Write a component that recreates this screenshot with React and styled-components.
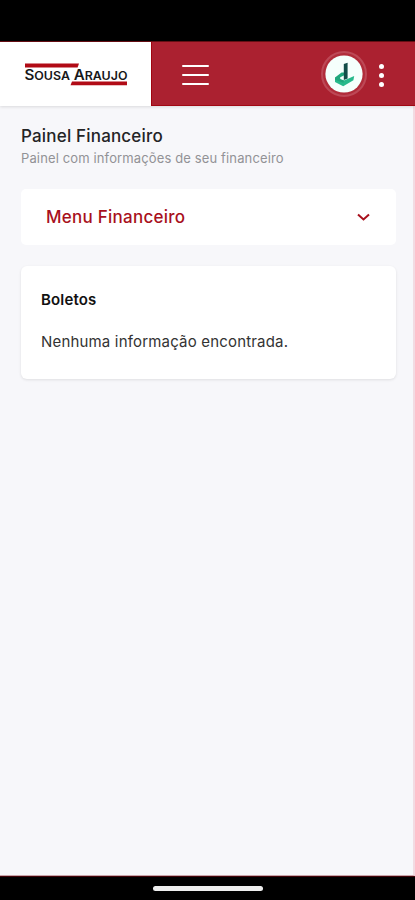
import React from 'react'
import styled, { createGlobalStyle } from 'styled-components'

const GlobalStyle = createGlobalStyle`
  * {
    box-sizing: border-box;
  }

  body {
    margin: 0;
    background: #000;
    font-family: Inter, 'Open Sans', sans-serif;
  }
`
const Screen = styled.div`
  display: flex;
  flex-direction: column;
  width: 415px;
  height: 900px;
  padding-top: 41px;
  overflow: hidden;
  background: #000;
`
const Header = styled.header`
  display: flex;
  flex: none;
  height: 65px;
  border-top: 1px solid #650e13;
  background: #ab2130;
  box-shadow: 0 1px 3px rgba(0, 0, 0, 0.12);
  z-index: 1;
`
const Brand = styled.div`
  width: 151px;
  height: 64px;
  background: #fff;
`
const Toolbar = styled.div`
  display: flex;
  flex: 1;
  align-items: center;
  padding: 1px 31px 0 30px;
  border-left: 1px solid #a10510;
  border-bottom: 1px solid #a10813;
`
const MenuButton = styled.button`
  display: flex;
  flex-direction: column;
  justify-content: space-between;
  width: 27px;
  height: 20px;
  margin: 2px auto 0 0;
  padding: 0;
  border: 0;
  background: none;
`
const MenuLine = styled.span`
  height: 2px;
  border-radius: 1px;
  background: #fff;
`
const Avatar = styled.div`
  width: 46px;
  height: 46px;
  margin-right: 12px;
  border: 2px solid #bd4856;
  border-radius: 50%;
  padding: 2px;
  background: #b12c3a;
`
const MoreButton = styled.button`
  display: flex;
  flex-direction: column;
  justify-content: space-between;
  width: 5px;
  height: 23px;
  margin: 2px 0 0;
  padding: 0;
  border: 0;
  background: none;
`
const Dot = styled.span`
  width: 5px;
  height: 5px;
  border-radius: 50%;
  background: #fff;
`
const Content = styled.main`
  flex: 1;
  padding: 19px 17px 0 21px;
  border-right: 2px solid #f2dbe2;
  border-bottom: 1px solid #c9a5aa;
  background: #f7f7fa;
`
const Title = styled.h1`
  margin: 0;
  color: #242426;
  font-size: 17px;
  font-weight: 500;
  line-height: 22px;
  letter-spacing: 0.18px;
`
const Subtitle = styled.p`
  margin: 1px 0 0;
  color: #929296;
  font-size: 13px;
  line-height: 20px;
  letter-spacing: 0.13px;
`
const MenuCard = styled.section`
  display: flex;
  align-items: center;
  justify-content: space-between;
  height: 56px;
  margin-top: 21px;
  padding: 0 25px 1px;
  border-radius: 5px;
  background: #fff;
  color: #a8101c;
`
const MenuTitle = styled.span`
  font-size: 17px;
  font-weight: 500;
  line-height: 22px;
  letter-spacing: 0.25px;
`
const Card = styled.section`
  height: 113px;
  margin-top: 21px;
  padding: 23px 20px;
  border-radius: 6px;
  background: #fff;
  box-shadow: 0 1px 3px rgba(0, 0, 0, 0.1);
`
const CardTitle = styled.h2`
  margin: 0;
  color: #111;
  font-size: 15px;
  font-weight: 600;
  line-height: 22px;
  letter-spacing: 0.15px;
`
const CardText = styled.p`
  margin: 20px 0 0;
  color: #333;
  font-size: 15px;
  line-height: 22px;
  letter-spacing: 0.18px;
`
const HomeBar = styled.footer`
  display: flex;
  flex: none;
  justify-content: center;
  height: 24px;
  padding-top: 9px;
  border-top: 1px solid #400308;
  background: #000;
`
const HomeIndicator = styled.div`
  width: 110px;
  height: 5px;
  border-radius: 3px;
  background: #eee;
`
const LogoText = styled.text`
  fill: #171719;
  font-family: Inter, sans-serif;
  font-size: 14px;
  font-weight: 600;
`

const Logo = () => {
  return (
    <svg width="151" height="64" viewBox="0 0 151 64">
      <path d="M25 21.6h54l-1.4 3.9H25z" fill="#b10b16" />
      <path d="M72 39.6h55v3.7H70.5z" fill="#b10b16" />
      <LogoText x="24.5" y="37.8" textLength="103" lengthAdjust="spacingAndGlyphs">
        S<tspan fontSize="11.5">OUSA</tspan> A<tspan fontSize="11.5">RAUJO</tspan>
      </LogoText>
    </svg>
  )
}

const AvatarMark = () => {
  return (
    <svg width="38" height="38" viewBox="0 0 38 38" display="block">
      <circle cx="19" cy="19" r="18.6" fill="#f5fffc" />
      <path d="M10 22.4l8.4 3.4L29.2 21l-.8 4.2L18.2 31.2 10 27z" fill="#27b98b" />
      <path d="M10 22.6l6.6-5h2.8v2.6l-4.2 2v1.8l4 1.4-1 2.4-8.2-3z" fill="#1fa77c" />
      <path d="M18.8 9l3.8-1.2v15.8L18.8 25z" fill="#124d48" />
    </svg>
  )
}

const App = () => {
  return (
    <Screen>
      <GlobalStyle />
      <Header>
        <Brand><Logo /></Brand>
        <Toolbar>
          <MenuButton aria-label="Menu">
            <MenuLine />
            <MenuLine />
            <MenuLine />
          </MenuButton>
          <Avatar><AvatarMark /></Avatar>
          <MoreButton aria-label="Mais">
            <Dot />
            <Dot />
            <Dot />
          </MoreButton>
        </Toolbar>
      </Header>
      <Content>
        <Title>Painel Financeiro</Title>
        <Subtitle>Painel com informações de seu financeiro</Subtitle>
        <MenuCard>
          <MenuTitle>Menu Financeiro</MenuTitle>
          <svg width="15" height="10" viewBox="0 0 15 10">
            <path d="M2 2.5l5.5 5 5.5-5" fill="none" stroke="currentColor" strokeWidth="2" />
          </svg>
        </MenuCard>
        <Card>
          <CardTitle>Boletos</CardTitle>
          <CardText>Nenhuma informação encontrada.</CardText>
        </Card>
      </Content>
      <HomeBar><HomeIndicator /></HomeBar>
    </Screen>
  )
}

export default App
